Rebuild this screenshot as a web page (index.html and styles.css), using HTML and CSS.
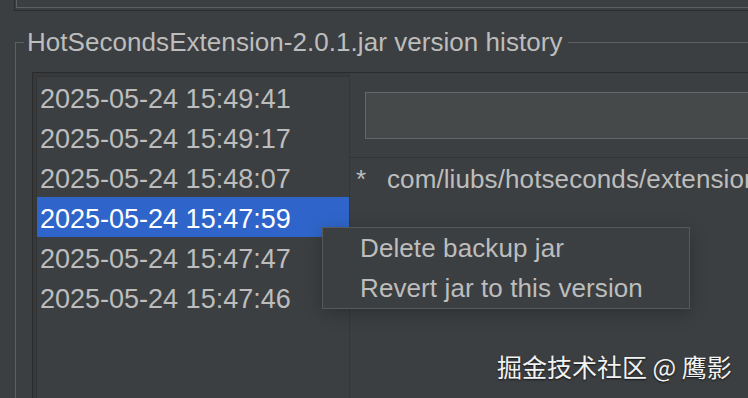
FILE: index.html
```html
<!DOCTYPE html>
<html>
<head>
<meta charset="utf-8">
<link rel="stylesheet" href="styles.css">
</head>
<body>
<div class="window">
  <div class="top-panel"><div class="top-inner"></div></div>
  <fieldset class="history">
    <legend class="history-title">HotSecondsExtension-2.0.1.jar version history</legend>
    <div class="split">
      <div class="list-wrap">
        <ul class="versions">
          <li class="version">2025-05-24 15:49:41</li>
          <li class="version">2025-05-24 15:49:17</li>
          <li class="version">2025-05-24 15:48:07</li>
          <li class="version selected">2025-05-24 15:47:59</li>
          <li class="version">2025-05-24 15:47:47</li>
          <li class="version">2025-05-24 15:47:46</li>
        </ul>
      </div>
      <div class="splitter"></div>
      <div class="detail">
        <div class="detail-top"><div class="field"></div></div>
        <div class="changes">
          <div class="change"><span class="mark">*</span><span class="path">com/liubs/hotseconds/extension/HotSecondsExtension.class</span></div>
        </div>
      </div>
    </div>
  </fieldset>
  <div class="menu">
    <div class="menu-item">Delete backup jar</div>
    <div class="menu-item">Revert jar to this version</div>
  </div>
  <div class="watermark">掘金技术社区 @ 鹰影</div>
</div>
</body>
</html>
```
FILE: styles.css
```css
html, body {
  margin: 0;
  padding: 0;
  background: #3c3f41;
}
.window {
  position: relative;
  width: 748px;
  height: 398px;
  overflow: hidden;
  background: #3c3f41;
  font-family: "Liberation Sans", Arial, sans-serif;
  color: #bdbdbd;
}
.top-panel {
  margin-left: 14px;
  height: 10px;
  border-bottom: 1px solid #2b2d2f;
  border-left: 1px solid #2b2d2f;
}
.top-inner {
  margin-left: 1px;
  height: 7px;
  border-left: 1px solid #5e6062;
  border-bottom: 1px solid #5e6062;
}
.history {
  margin: 16px 0 0 15px;
  padding: 0;
  width: 900px;
  height: 420px;
  min-width: 0;
  border: 1px solid #5e6062;
  box-sizing: border-box;
}
.history-title {
  margin-left: 8px;
  padding: 0 5px 0 3px;
  font-size: 26px;
  letter-spacing: 0.05px;
  line-height: 30px;
  color: #bdbdbd;
}
.split {
  margin: 15px 0 0 16px;
  display: flex;
  height: 400px;
  border-top: 1px solid #2a2b2d;
  border-left: 1px solid #2a2b2d;
}
.list-wrap {
  padding: 3px 0 0 3px;
  background: #37393b;
}
.versions {
  list-style: none;
  margin: 0;
  padding: 0;
  width: 312px;
  height: 100%;
  border-top: 1px solid #323436;
  border-left: 1px solid #323436;
  background: #3c3f41;
}
.version {
  height: 40px;
  box-sizing: border-box;
  padding: 4px 0 0 3px;
  font-size: 27px;
  line-height: 36px;
  white-space: nowrap;
  color: #bdbdbd;
}
.version.selected {
  background: #2f65ca;
  color: #ffffff;
}
.splitter {
  width: 3px;
  background: #2f3133;
  border-left: 1px solid #343638;
  box-sizing: border-box;
}
.detail {
  flex: 1;
  display: flex;
  flex-direction: column;
}
.detail-top {
  height: 84px;
  box-sizing: border-box;
  padding: 19px 0 0 15px;
}
.field {
  height: 45px;
  border: 1px solid #646668;
  border-right: none;
  background: #45494a;
}
.changes {
  flex: 1;
  border-top: 1px solid #323436;
}
.change {
  padding: 1px 0 0 6px;
  font-size: 26px;
  letter-spacing: 0.1px;
  line-height: 40px;
  white-space: nowrap;
  color: #bdbdbd;
}
.mark {
  display: inline-block;
  width: 31px;
}
.menu {
  position: absolute;
  left: 322px;
  top: 227px;
  width: 366px;
  padding: 0;
  background: #3c3f41;
  border: 1px solid #56585a;
  box-shadow: 0 4px 16px rgba(0, 0, 0, 0.25);
}
.menu-item {
  height: 40px;
  padding-left: 37px;
  font-size: 26px;
  letter-spacing: 0.1px;
  line-height: 40px;
  color: #bdbdbd;
  white-space: nowrap;
}
.watermark {
  position: absolute;
  left: 497px;
  top: 354px;
  font-family: "Noto Sans CJK SC", sans-serif;
  font-size: 25px;
  line-height: 25px;
  color: #f2f2f2;
  white-space: nowrap;
  text-shadow: 0 1px 2px rgba(0, 0, 0, 0.7);
}
```
